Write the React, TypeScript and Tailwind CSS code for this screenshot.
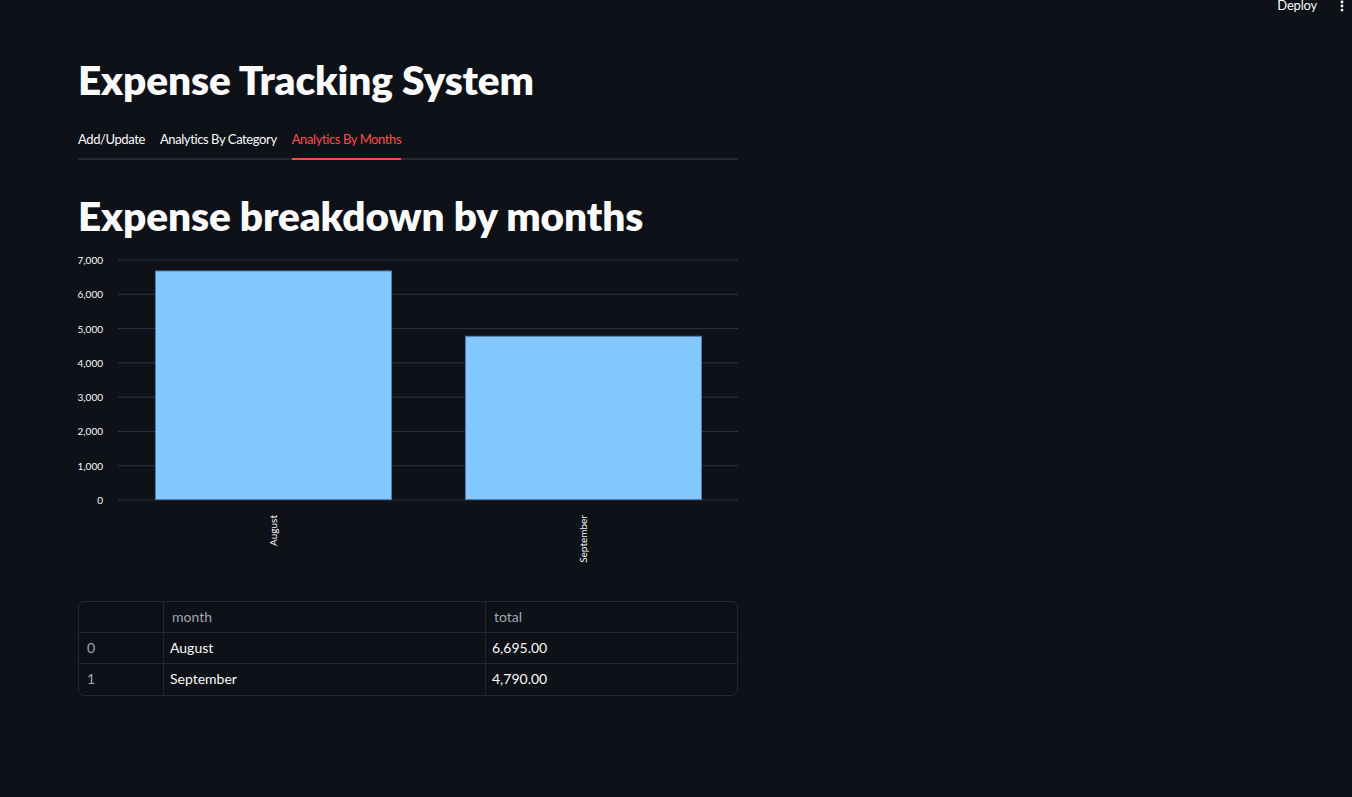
import { MoreVertical } from "lucide-react";

const font = { fontFamily: "Lato, 'Noto Sans', sans-serif" };

const rows = [
  { idx: 0, month: "August", total: 6695 },
  { idx: 1, month: "September", total: 4790 },
];

function Chart() {
  const top = 8;
  const h = 240;
  const max = 7000;
  const ticks = [0, 1000, 2000, 3000, 4000, 5000, 6000, 7000];
  const y = (v: number) => top + h - (v / max) * h;
  return (
    <svg width={660} height={320} className="block overflow-visible" style={font}>
      {ticks.map((t) => (
        <g key={t}>
          <line x1={40} x2={660} y1={y(t)} y2={y(t)} stroke="#31333f" strokeWidth={1} />
          <text x={25} y={y(t) + 4} textAnchor="end" fontSize={10} fill="#fafafa">
            {t.toLocaleString("en-US")}
          </text>
        </g>
      ))}
      {rows.map((r, i) => {
        const x = 77 + i * 310;
        return (
          <g key={r.month}>
            <rect
              x={x + 0.5}
              y={y(r.total) + 0.5}
              width={236}
              height={y(0) - y(r.total) - 1}
              fill="#83c9ff"
              stroke="#4d7eaa"
              strokeWidth={1}
            />
            <text
              transform={`translate(${x + 122}, ${y(0) + 15}) rotate(-90)`}
              textAnchor="end"
              fontSize={10}
              fill="#fafafa"
            >
              {r.month}
            </text>
          </g>
        );
      })}
    </svg>
  );
}

export default function App() {
  return (
    <div className="relative min-h-[797px] w-full bg-[#0e1117] text-[#fafafa]" style={font}>
      <div className="absolute right-0 top-0 flex items-start gap-[18px] pr-[3px]">
        <span className="-mt-[2px] text-[13px] leading-[14px] tracking-[-0.2px]">Deploy</span>
        <MoreVertical size={14} className="-mt-[1px] text-[#fafafa]" strokeWidth={3} />
      </div>

      <div className="ml-[78px] w-[660px] pt-[52px]">
        <h1 className="text-[40.5px] font-extrabold leading-[56px] tracking-[-0.1px]">Expense Tracking System</h1>

        <div className="mt-[16px] flex gap-[15px] border-b-2 border-[#262730] text-[13px] tracking-[-0.4px]">
          <div className="pb-[8px] pt-[6px]">Add/Update</div>
          <div className="pb-[8px] pt-[6px]">Analytics By Category</div>
          <div className="-mb-[2px] border-b-2 border-[#ff4b4b] pb-[8px] pt-[6px] text-[#ff4b4b]">
            Analytics By Months
          </div>
        </div>

        <h1 className="mt-[28px] text-[40.5px] font-extrabold leading-[56px] tracking-[-0.1px]">
          Expense breakdown by months
        </h1>

        <div className="mt-[8px]">
          <Chart />
        </div>

        <div className="mt-[29px] overflow-hidden rounded-md border border-[#262730] text-sm">
          <div className="grid h-[31px] grid-cols-[85px_322px_1fr] border-b border-[#262730] text-[#a3a8b4]">
            <div className="border-r border-[#262730]" />
            <div className="flex items-center border-r border-[#262730] px-2">month</div>
            <div className="flex items-center px-2">total</div>
          </div>
          {rows.map((r, i) => (
            <div
              key={r.idx}
              className={`grid h-[31px] grid-cols-[85px_322px_1fr] ${i === 0 ? "border-b border-[#262730]" : ""}`}
            >
              <div className="flex items-center border-r border-[#262730] px-2 text-[#a3a8b4]">{r.idx}</div>
              <div className="flex items-center border-r border-[#262730] px-[6px]">{r.month}</div>
              <div className="flex items-center px-[6px]">
                {r.total.toLocaleString("en-US", { minimumFractionDigits: 2 })}
              </div>
            </div>
          ))}
        </div>
      </div>
    </div>
  );
}
